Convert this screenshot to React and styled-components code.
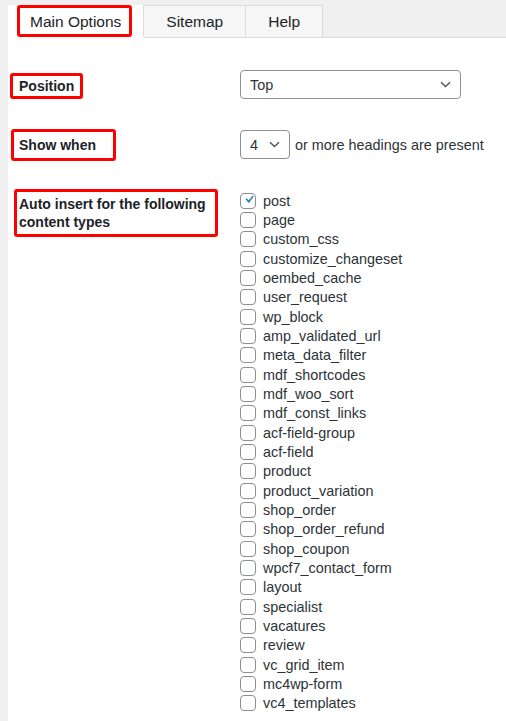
import React from 'react';
import styled, { createGlobalStyle } from 'styled-components';

const GlobalStyle = createGlobalStyle`
  html, body {
    margin: 0;
    padding: 0;
    background: #f0f0f0;
    font-family: "Liberation Sans", Arial, sans-serif;
    -webkit-font-smoothing: antialiased;
  }
`;

const Page = styled.div`
  min-height: 100vh;
  padding-left: 8px;
  display: flex;
  flex-direction: column;
`;

const TabBar = styled.div`
  display: flex;
  align-items: flex-start;
  padding-top: 5px;
  border-bottom: 1px solid #dcdcdc;
`;

const Tab = styled.div`
  box-sizing: border-box;
  height: ${({ $active }) => ($active ? '33px' : '32px')};
  margin-bottom: ${({ $active }) => ($active ? '-1px' : '0')};
  margin-left: ${({ $active }) => ($active ? '0' : '-1px')};
  padding: ${({ $active }) => ($active ? '0 12px 0 9px' : '1px 22px 0')};
  display: flex;
  align-items: ${({ $active }) => ($active ? 'flex-start' : 'center')};
  background: ${({ $active }) => ($active ? '#fff' : '#f6f6f6')};
  border: ${({ $active }) => ($active ? 'none' : '1px solid #dcdcdc')};
  border-bottom: none;
  font-size: 15.5px;
  color: #1d2327;
  &:first-child {
    margin-left: 0;
  }
`;

const Highlight = styled.div`
  box-sizing: border-box;
  display: flex;
  align-items: center;
  border: 3px solid #ff0000;
  border-radius: 3px;
  width: ${({ $w }) => $w}px;
  height: ${({ $h }) => $h}px;
  margin-top: ${({ $mt }) => $mt || 0}px;
  margin-left: ${({ $ml }) => $ml || 0}px;
  padding-left: ${({ $pl }) => $pl}px;
  background: #fff;
`;

const TabHighlight = styled(Highlight)`
  padding: 1px 8px 0 10px;
`;

const Content = styled.div`
  flex: 1;
  background: #fff;
  padding: 32px 0 20px;
`;

const Row = styled.div`
  display: flex;
  align-items: flex-start;
  margin-top: ${({ $mt }) => $mt || 0}px;
`;

const LabelCell = styled.div`
  width: 232px;
  flex-shrink: 0;
`;

const LabelText = styled.span`
  font-size: 14px;
  font-weight: 700;
  line-height: 18px;
  color: #1d2327;
`;

const ValueCell = styled.div`
  display: flex;
  align-items: center;
  gap: 5px;
  margin-top: ${({ $mt }) => $mt || 0}px;
  font-size: 14.4px;
  color: #2c3338;
`;

const Select = styled.div`
  box-sizing: border-box;
  width: ${({ $w }) => $w}px;
  height: 29px;
  border: 1px solid #8c8f94;
  border-radius: 4px;
  padding: 0 9px 0 9px;
  display: flex;
  align-items: center;
  justify-content: space-between;
  font-size: 14.4px;
  color: #2c3338;
  background: #fff;
`;

const CheckList = styled.div`
  display: flex;
  flex-direction: column;
  margin-top: 2px;
`;

const CheckItem = styled.label`
  display: flex;
  align-items: center;
  gap: 7px;
  height: 19.33px;
  font-size: 14.4px;
  color: #2c3338;
`;

const Box = styled.span`
  box-sizing: border-box;
  width: 16px;
  height: 16px;
  border: 1px solid #8c8f94;
  border-radius: 4px;
  background: #fff;
  display: flex;
  align-items: center;
  justify-content: center;
  flex-shrink: 0;
  svg {
    width: 19px;
    height: 19px;
    margin: -2px -2px 0 0;
  }
`;

const Chevron = () => (
  <svg width="11" height="7" viewBox="0 0 11 7" fill="none">
    <path d="M1 1.2l4.5 4.3L10 1.2" stroke="#50575e" strokeWidth="1.5" />
  </svg>
);

const Check = () => (
  <svg viewBox="0 0 20 20">
    <path d="M14.83 4.89l1.34.94-5.81 8.38H9.02L5.78 9.67l1.34-1.25 2.57 2.4z" fill="#3582c4" />
  </svg>
);

const types = [
  'post', 'page', 'custom_css', 'customize_changeset', 'oembed_cache', 'user_request',
  'wp_block', 'amp_validated_url', 'meta_data_filter', 'mdf_shortcodes', 'mdf_woo_sort',
  'mdf_const_links', 'acf-field-group', 'acf-field', 'product', 'product_variation',
  'shop_order', 'shop_order_refund', 'shop_coupon', 'wpcf7_contact_form', 'layout',
  'specialist', 'vacatures', 'review', 'vc_grid_item', 'mc4wp-form', 'vc4_templates',
];

const App = () => {
  return (
    <Page>
      <GlobalStyle />
      <TabBar>
        <Tab $active>
          <TabHighlight $h={32}>Main Options</TabHighlight>
        </Tab>
        <Tab>Sitemap</Tab>
        <Tab>Help</Tab>
      </TabBar>

      <Content>
        <Row>
          <LabelCell>
            <Highlight $w={73} $h={26} $mt={3} $ml={2} $pl={6}>
              <LabelText>Position</LabelText>
            </Highlight>
          </LabelCell>
          <ValueCell>
            <Select $w={221}>
              Top
              <Chevron />
            </Select>
          </ValueCell>
        </Row>

        <Row $mt={30}>
          <LabelCell>
            <Highlight $w={105} $h={32} $ml={3} $pl={5}>
              <LabelText>Show when</LabelText>
            </Highlight>
          </LabelCell>
          <ValueCell $mt={1}>
            <Select $w={50}>
              4
              <Chevron />
            </Select>
            or more headings are present
          </ValueCell>
        </Row>

        <Row $mt={28}>
          <LabelCell>
            <Highlight $w={204} $h={48} $ml={6} $pl={2}>
              <LabelText>Auto insert for the following content types</LabelText>
            </Highlight>
          </LabelCell>
          <CheckList>
            {types.map((t, i) => (
              <CheckItem key={t}>
                <Box>{i === 0 && <Check />}</Box>
                {t}
              </CheckItem>
            ))}
          </CheckList>
        </Row>
      </Content>
    </Page>
  );
};

export default App;
